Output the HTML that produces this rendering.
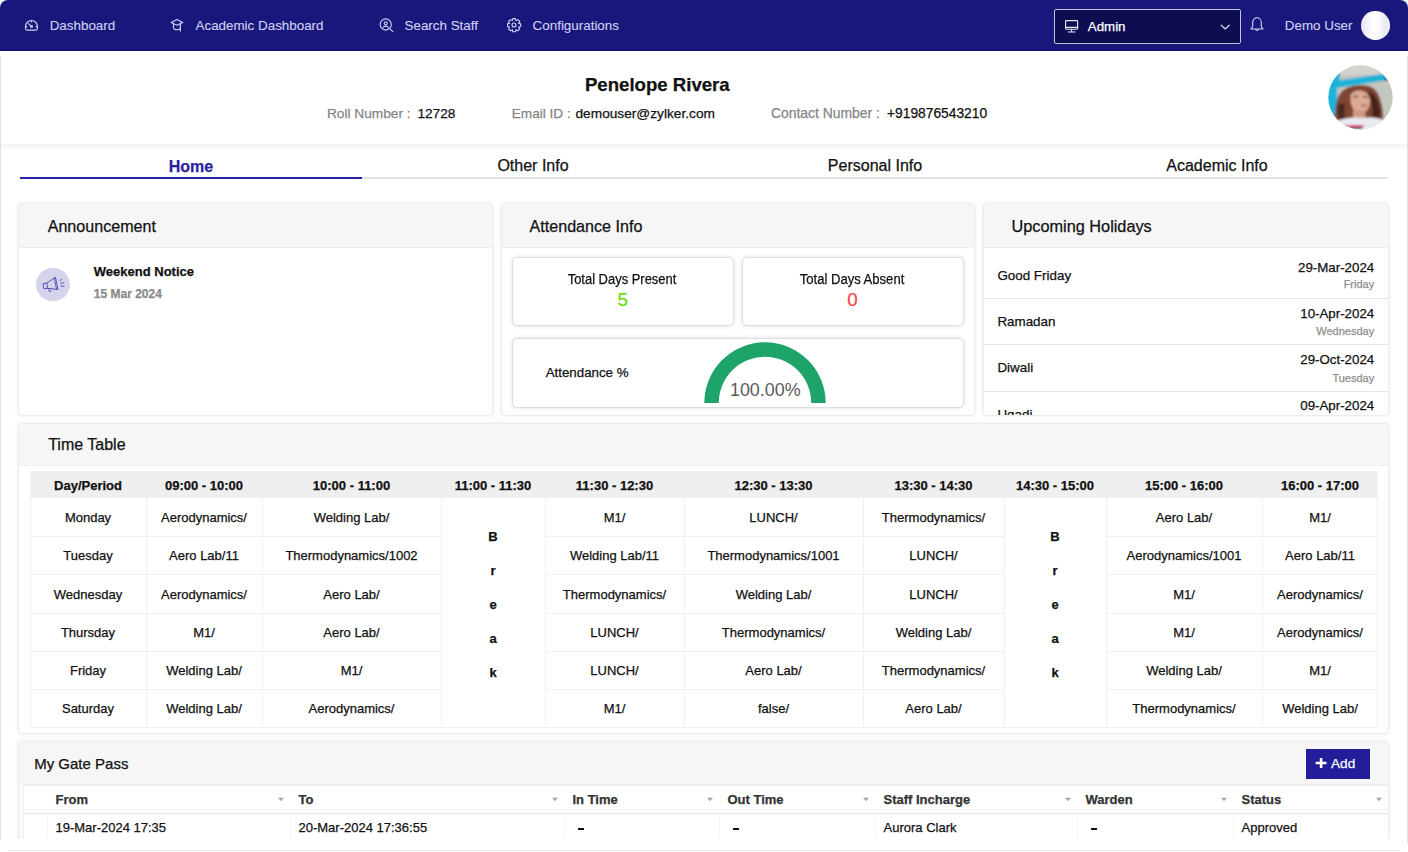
<!DOCTYPE html>
<html><head><meta charset="utf-8"><style>
html,body{margin:0;padding:0;}
body{width:1408px;height:852px;overflow:hidden;position:relative;background:#fff;font-family:"Liberation Sans",sans-serif;}
.t{position:absolute;white-space:nowrap;line-height:1;-webkit-text-stroke:0.25px currentColor;}
.c{text-align:center;}
.r{text-align:right;}
.b{position:absolute;}
</style></head><body>
<div class="b" style="left:0px;top:0px;width:1408px;height:51px;background:#19177c;border-radius:8px 8px 0 0;"></div>
<div class="b" style="left:0px;top:49px;width:1408px;height:2px;background:#110f79;"></div>
<svg class="b" style="left:24px;top:19px;" width="15" height="13" viewBox="0 0 15 13"><g fill="none" stroke="#d2d2f2" stroke-width="1.1" stroke-linecap="round" stroke-linejoin="round"><path d="M1.5 7.45 A5.95 5.95 0 1 1 13.4 7.45 V9.6 Q13.4 11.1 11.9 11.1 H3 Q1.5 11.1 1.5 9.6 Z"/><path d="M1.6 7.6h1.3M12 7.6h1.3M7.45 1.6v1.3M4.6 4.6l2.2 2.3"/><rect x="6.65" y="6.65" width="1.6" height="1.6"/></g></svg>
<div class="t" style="left:49.7px;top:19.26px;font-size:13.4px;color:#d2d2f2;-webkit-text-stroke:0.1px currentColor;">Dashboard</div>
<svg class="b" style="left:170px;top:18px;" width="15" height="15" viewBox="0 0 15 15"><g fill="none" stroke="#d2d2f2" stroke-width="1.1" stroke-linecap="round" stroke-linejoin="round"><path d="M1.2 4.5 L7 1.6 L12.8 4.5 L7 7.2 Z"/><path d="M3.5 5.8v3.2a3.5 2.8 0 0 0 7 0V5.8"/><path d="M10.4 5.2v7.8"/></g></svg>
<div class="t" style="left:195.5px;top:19.26px;font-size:13.4px;color:#d2d2f2;-webkit-text-stroke:0.1px currentColor;">Academic Dashboard</div>
<svg class="b" style="left:379px;top:18px;" width="15" height="15" viewBox="0 0 15 15"><g fill="none" stroke="#d2d2f2" stroke-width="1.1" stroke-linecap="round" stroke-linejoin="round"><circle cx="6.7" cy="6.5" r="5.6"/><circle cx="6.7" cy="5.2" r="1.5"/><path d="M4 9.3 Q6.7 6.8 9.4 9.3"/><path d="M10.8 10.6 L13.8 13.6"/></g></svg>
<div class="t" style="left:404.5px;top:19.26px;font-size:13.4px;color:#d2d2f2;-webkit-text-stroke:0.1px currentColor;">Search Staff</div>
<svg class="b" style="left:507px;top:18px;" width="15" height="15" viewBox="0 0 15 15"><g fill="none" stroke="#d2d2f2" stroke-width="1.1" stroke-linecap="round" stroke-linejoin="round"><polygon points="13.67,5.87 13.67,8.53 11.57,9.20 11.68,8.95 12.68,10.90 10.80,12.78 8.85,11.78 9.10,11.67 8.43,13.77 5.77,13.77 5.10,11.67 5.35,11.78 3.40,12.78 1.52,10.90 2.52,8.95 2.63,9.20 0.53,8.53 0.53,5.87 2.63,5.20 2.52,5.45 1.52,3.50 3.40,1.62 5.35,2.62 5.10,2.73 5.77,0.63 8.43,0.63 9.10,2.73 8.85,2.62 10.80,1.62 12.68,3.50 11.68,5.45 11.57,5.20"/><circle cx="7" cy="7" r="2"/></g></svg>
<div class="t" style="left:532.6px;top:19.26px;font-size:13.4px;color:#d2d2f2;-webkit-text-stroke:0.1px currentColor;">Configurations</div>
<div class="b" style="left:1054px;top:9px;width:187px;height:35px;background:#0f0d52;border:1.5px solid #c2c2dc;border-radius:2px;box-sizing:border-box;"></div>
<svg class="b" style="left:1064px;top:19px;" width="15" height="15" viewBox="0 0 15 15"><g fill="none" stroke="#e8e8f4" stroke-width="1.1" stroke-linecap="round" stroke-linejoin="round"><rect x="1.6" y="1.6" width="12" height="8.6" rx="0.6"/><path d="M1.6 8.4h12M7.6 10.4v2.4M4.2 13h6.8"/></g></svg>
<div class="t" style="left:1087.8px;top:20.24px;font-size:13.3px;color:#ffffff;">Admin</div>
<svg class="b" style="left:1219px;top:23px;" width="12" height="8" viewBox="0 0 12 8"><path d="M2.2 2.2 L6.2 6 L10.2 2.2" fill="none" stroke="#dcdcee" stroke-width="1.2" stroke-linecap="round"/></svg>
<svg class="b" style="left:1249px;top:16px;" width="16" height="17" viewBox="0 0 16 17"><g fill="none" stroke="#d2d2f2" stroke-width="1.1" stroke-linecap="round" stroke-linejoin="round"><path d="M2 13 Q3.6 11.6 3.7 9.6 V6.3 A4.3 4.5 0 0 1 12.3 6.3 V9.6 Q12.4 11.6 14 13 Z"/><path d="M6.6 13.4a1.5 1.5 0 0 0 2.8 0"/></g></svg>
<div class="t" style="left:1284.8px;top:19.26px;font-size:13.4px;color:#d2d2f2;-webkit-text-stroke:0.1px currentColor;">Demo User</div>
<div class="b" style="left:1361.2px;top:11.3px;width:28.4px;height:28.4px;border-radius:50%;background:linear-gradient(90deg,#e4e4ec 0%,#f6f6fa 25%,#ffffff 45%,#fbfbfd 60%,#e8e8ee 85%,#f4f4f6 100%);"></div>
<div class="b" style="left:8px;top:850px;width:1392px;height:1px;background:#e6e6e6;"></div>
<div class="b" style="left:0px;top:56px;width:1px;height:784px;background:#e0e0e0;"></div>
<div class="b" style="left:1407px;top:56px;width:1px;height:787px;background:#e0e0e0;"></div>
<div class="b" style="left:1px;top:144px;width:1406px;height:5px;background:linear-gradient(#f1f1f1,#f5f5f5 35%,#fafafa 75%,#fdfdfd);"></div>
<div class="t c" style="left:357.3px;width:600px;top:75.76px;font-size:18.6px;color:#111;font-weight:bold;">Penelope Rivera</div>
<div class="t" style="left:326.9px;top:107.20px;font-size:13.7px;color:#858585;">Roll Number : </div>
<div class="t" style="left:417.4px;top:107.20px;font-size:13.7px;color:#111;">12728</div>
<div class="t" style="left:511.8px;top:107.29px;font-size:13.6px;color:#858585;">Email ID : </div>
<div class="t" style="left:575.5px;top:107.20px;font-size:13.7px;color:#111;">demouser@zylker.com</div>
<div class="t" style="left:771.0px;top:107.03px;font-size:13.9px;color:#858585;">Contact Number : </div>
<div class="t" style="left:887.0px;top:107.12px;font-size:13.8px;color:#111;">+919876543210</div>
<svg class="b" style="left:1328px;top:65px;" width="65" height="65" viewBox="0 0 65 65">
<defs><clipPath id="pc"><circle cx="32.5" cy="32.5" r="32.2"/></clipPath>
<filter id="bl" x="-10%" y="-10%" width="120%" height="120%"><feGaussianBlur stdDeviation="0.9"/></filter></defs>
<g clip-path="url(#pc)"><g filter="url(#bl)">
<rect x="-2" y="-2" width="69" height="69" fill="#c4c6c0"/>
<rect x="-2" y="-2" width="69" height="12" fill="#d2d2ce"/>
<path d="M-2 6 L12 6 L11.5 15.3 L55.7 8.8 L62 13 L59.5 15 L9 23 L9.5 54 L-2 54 Z" fill="#1fb3d9"/>
<path d="M55 13 L62 12 L62 15 L56 16 Z" fill="#137a96"/>
<path d="M7 58 Q6 40 11 30 Q17 20 33 20 Q47 20 51 31 Q56 44 55 56 L50 60 L12 60 Z" fill="#7e4432"/>
<path d="M40 26 Q50 30 52 45 Q53 52 49 56 L44 50 Q46 38 40 30 Z" fill="#45231c"/>
<path d="M10 40 Q9 50 12 56 L18 56 Q15 48 17 38 Z" fill="#4a2720"/>
<path d="M22.5 30 Q25 25 33 25.5 Q41.5 27 42 35 Q42 44 37 47 Q31 49 26 45 Q22 40 22.5 30 Z" fill="#dcab94"/>
<path d="M25 45 L37 45 L38 54 L25 54 Z" fill="#d09a80"/>
<path d="M25 31.5 h5 M35 32 h5" stroke="#6a4a44" stroke-width="1.5"/>
<ellipse cx="36" cy="40.5" rx="3" ry="1.2" fill="#b86c66"/>
<path d="M4 70 L8 56 Q22 51 34 53 Q48 51 58 56 L62 70 Z" fill="#eaeaf2"/>
<rect x="16" y="60" width="20" height="2" fill="#e03850"/>
<rect x="22" y="62.2" width="12" height="2" fill="#3a3f7a"/>
</g></g></svg>
<div class="t c" style="left:-109.0px;width:600px;top:158.56px;font-size:16px;color:#2824a0;font-weight:bold;">Home</div>
<div class="t c" style="left:233.0px;width:600px;top:157.86px;font-size:16px;color:#111;">Other Info</div>
<div class="t c" style="left:575.0px;width:600px;top:157.86px;font-size:16px;color:#111;">Personal Info</div>
<div class="t c" style="left:917.0px;width:600px;top:157.86px;font-size:16px;color:#111;">Academic Info</div>
<div class="b" style="left:362px;top:177px;width:1026px;height:2px;background:#e3e3e3;"></div>
<div class="b" style="left:20px;top:177px;width:342px;height:2px;background:#2723a2;"></div>
<div class="b" style="left:18px;top:203px;width:475px;height:213px;background:#fff;border:1px solid #ebebeb;border-radius:4px;box-shadow:0 0 5px rgba(0,0,0,0.07);box-sizing:border-box;"></div><div class="b" style="left:19px;top:204px;width:473px;height:43.5px;background:#f6f6f6;border-radius:3px 3px 0 0;"></div><div class="b" style="left:19px;top:247px;width:473px;height:1px;background:#eeeeee;"></div>
<div class="b" style="left:501px;top:203px;width:474px;height:213px;background:#fff;border:1px solid #ebebeb;border-radius:4px;box-shadow:0 0 5px rgba(0,0,0,0.07);box-sizing:border-box;"></div><div class="b" style="left:502px;top:204px;width:472px;height:43.5px;background:#f6f6f6;border-radius:3px 3px 0 0;"></div><div class="b" style="left:502px;top:247px;width:472px;height:1px;background:#eeeeee;"></div>
<div class="b" style="left:983px;top:203px;width:406px;height:213px;background:#fff;border:1px solid #ebebeb;border-radius:4px;box-shadow:0 0 5px rgba(0,0,0,0.07);box-sizing:border-box;"></div><div class="b" style="left:984px;top:204px;width:404px;height:43.5px;background:#f6f6f6;border-radius:3px 3px 0 0;"></div><div class="b" style="left:984px;top:247px;width:404px;height:1px;background:#eeeeee;"></div>
<div class="t" style="left:47.7px;top:218.47px;font-size:16.1px;color:#111;">Announcement</div>
<div class="t" style="left:529.6px;top:218.47px;font-size:16.1px;color:#111;">Attendance Info</div>
<div class="t" style="left:1011.5px;top:218.30px;font-size:16.3px;color:#111;">Upcoming Holidays</div>
<div class="b" style="left:36.3px;top:267.7px;width:33.5px;height:33.5px;border-radius:50%;background:#d5d4ec;"></div>
<svg class="b" style="left:33px;top:265px;" width="40" height="40" viewBox="0 0 40 40"><g fill="none" stroke="#4f4cb6" stroke-width="0.95" stroke-linecap="round" stroke-linejoin="round"><path d="M10.5 18.7 L13.8 18.1 L14.5 23.3 L11.2 23.7 Z"/><path d="M13.8 18.1 L22.4 12.2 L25.1 24.5 L14.5 23.3"/><path d="M21.3 13.2 L23.6 24.3"/><path d="M15.6 23.6 L16.4 26.4 L18 26.2"/><path d="M27.3 15.6 L28.8 14M27.6 18.2 L30.8 17.9M27.9 21 L31.2 21.3"/></g></svg>
<div class="t" style="left:93.8px;top:264.60px;font-size:13px;color:#111;font-weight:bold;">Weekend Notice</div>
<div class="t" style="left:93.8px;top:287.74px;font-size:12px;color:#8a8a8a;font-weight:bold;">15 Mar 2024</div>
<div class="b" style="left:512px;top:257px;width:222px;height:69px;background:#fff;border:1px solid #dedede;border-radius:5px;box-shadow:0 0 4px rgba(0,0,0,0.13);box-sizing:border-box;"></div>
<div class="b" style="left:742px;top:257px;width:222px;height:69px;background:#fff;border:1px solid #dedede;border-radius:5px;box-shadow:0 0 4px rgba(0,0,0,0.13);box-sizing:border-box;"></div>
<div class="b" style="left:512px;top:338px;width:452px;height:70px;background:#fff;border:1px solid #dedede;border-radius:5px;box-shadow:0 0 4px rgba(0,0,0,0.13);box-sizing:border-box;"></div>
<div class="t c" style="left:322.4px;width:600px;top:272.05px;font-size:14px;color:#111;transform:scaleX(0.925);">Total Days Present</div>
<div class="t c" style="left:322.7px;width:600px;top:291.49px;font-size:18.8px;color:#6edc0c;">5</div>
<div class="t c" style="left:552.4px;width:600px;top:272.05px;font-size:14px;color:#111;transform:scaleX(0.933);">Total Days Absent</div>
<div class="t c" style="left:552.5px;width:600px;top:291.49px;font-size:18.8px;color:#f5484a;">0</div>
<div class="t" style="left:545.7px;top:366.44px;font-size:13.3px;color:#111;">Attendance %</div>
<svg class="b" style="left:700px;top:338px;" width="130" height="66" viewBox="700 338 130 66">
<path d="M704.3 403 A60.7 60.7 0 0 1 825.7 403 L811.2 403 A46.2 46.2 0 0 0 718.8 403 Z" fill="#1ea46b"/></svg>
<div class="t c" style="left:465.3px;width:600px;top:381.65px;font-size:17.9px;color:#5a5a5a;-webkit-text-stroke:0;">100.00%</div>
<div class="b" style="left:984px;top:298px;width:404px;height:1px;background:#e6e6e6;"></div>
<div class="b" style="left:984px;top:344px;width:404px;height:1px;background:#e6e6e6;"></div>
<div class="b" style="left:984px;top:391px;width:404px;height:1px;background:#e6e6e6;"></div>
<div class="b" style="left:984px;top:248px;width:404px;height:167px;overflow:hidden;">
<div class="t" style="left:13.4px;top:20.96px;font-size:13.4px;color:#111;">Good Friday</div>
<div class="t r" style="left:-209.8px;width:600px;top:12.74px;font-size:13.3px;color:#111;">29-Mar-2024</div>
<div class="t r" style="left:-209.8px;width:600px;top:30.99px;font-size:11px;color:#8e8e8e;">Friday</div>
<div class="t" style="left:13.4px;top:67.16px;font-size:13.4px;color:#111;">Ramadan</div>
<div class="t r" style="left:-209.8px;width:600px;top:58.94px;font-size:13.3px;color:#111;">10-Apr-2024</div>
<div class="t r" style="left:-209.8px;width:600px;top:78.19px;font-size:11px;color:#8e8e8e;">Wednesday</div>
<div class="t" style="left:13.4px;top:113.46px;font-size:13.4px;color:#111;">Diwali</div>
<div class="t r" style="left:-209.8px;width:600px;top:105.44px;font-size:13.3px;color:#111;">29-Oct-2024</div>
<div class="t r" style="left:-209.8px;width:600px;top:124.69px;font-size:11px;color:#8e8e8e;">Tuesday</div>
<div class="t" style="left:13.4px;top:159.66px;font-size:13.4px;color:#111;">Ugadi</div>
<div class="t r" style="left:-209.8px;width:600px;top:151.34px;font-size:13.3px;color:#111;">09-Apr-2024</div>
</div>
<div class="b" style="left:18px;top:423px;width:1371px;height:311px;background:#fff;border:1px solid #ebebeb;border-radius:4px;box-shadow:0 0 5px rgba(0,0,0,0.07);box-sizing:border-box;"></div><div class="b" style="left:19px;top:424px;width:1369px;height:42px;background:#f6f6f6;border-radius:3px 3px 0 0;"></div><div class="b" style="left:19px;top:465px;width:1369px;height:1px;background:#eeeeee;"></div>
<div class="t" style="left:48.2px;top:436.56px;font-size:16px;color:#111;">Time Table</div>
<div class="b" style="left:30px;top:471px;width:1348px;height:27px;background:#efefef;"></div>
<div class="t c" style="left:-212.0px;width:600px;top:478.70px;font-size:13px;color:#111;font-weight:bold;">Day/Period</div>
<div class="t c" style="left:-96.0px;width:600px;top:478.70px;font-size:13px;color:#111;font-weight:bold;">09:00 - 10:00</div>
<div class="t c" style="left:51.5px;width:600px;top:478.70px;font-size:13px;color:#111;font-weight:bold;">10:00 - 11:00</div>
<div class="t c" style="left:193.0px;width:600px;top:478.70px;font-size:13px;color:#111;font-weight:bold;">11:00 - 11:30</div>
<div class="t c" style="left:314.5px;width:600px;top:478.70px;font-size:13px;color:#111;font-weight:bold;">11:30 - 12:30</div>
<div class="t c" style="left:473.5px;width:600px;top:478.70px;font-size:13px;color:#111;font-weight:bold;">12:30 - 13:30</div>
<div class="t c" style="left:633.5px;width:600px;top:478.70px;font-size:13px;color:#111;font-weight:bold;">13:30 - 14:30</div>
<div class="t c" style="left:755.0px;width:600px;top:478.70px;font-size:13px;color:#111;font-weight:bold;">14:30 - 15:00</div>
<div class="t c" style="left:884.0px;width:600px;top:478.70px;font-size:13px;color:#111;font-weight:bold;">15:00 - 16:00</div>
<div class="t c" style="left:1020.0px;width:600px;top:478.70px;font-size:13px;color:#111;font-weight:bold;">16:00 - 17:00</div>
<div class="b" style="left:30px;top:536px;width:116px;height:1px;background:#f0f0f0;"></div>
<div class="b" style="left:146px;top:536px;width:116px;height:1px;background:#f0f0f0;"></div>
<div class="b" style="left:262px;top:536px;width:179px;height:1px;background:#f0f0f0;"></div>
<div class="b" style="left:545px;top:536px;width:139px;height:1px;background:#f0f0f0;"></div>
<div class="b" style="left:684px;top:536px;width:179px;height:1px;background:#f0f0f0;"></div>
<div class="b" style="left:863px;top:536px;width:141px;height:1px;background:#f0f0f0;"></div>
<div class="b" style="left:1106px;top:536px;width:156px;height:1px;background:#f0f0f0;"></div>
<div class="b" style="left:1262px;top:536px;width:116px;height:1px;background:#f0f0f0;"></div>
<div class="b" style="left:30px;top:574px;width:116px;height:1px;background:#f0f0f0;"></div>
<div class="b" style="left:146px;top:574px;width:116px;height:1px;background:#f0f0f0;"></div>
<div class="b" style="left:262px;top:574px;width:179px;height:1px;background:#f0f0f0;"></div>
<div class="b" style="left:545px;top:574px;width:139px;height:1px;background:#f0f0f0;"></div>
<div class="b" style="left:684px;top:574px;width:179px;height:1px;background:#f0f0f0;"></div>
<div class="b" style="left:863px;top:574px;width:141px;height:1px;background:#f0f0f0;"></div>
<div class="b" style="left:1106px;top:574px;width:156px;height:1px;background:#f0f0f0;"></div>
<div class="b" style="left:1262px;top:574px;width:116px;height:1px;background:#f0f0f0;"></div>
<div class="b" style="left:30px;top:613px;width:116px;height:1px;background:#f0f0f0;"></div>
<div class="b" style="left:146px;top:613px;width:116px;height:1px;background:#f0f0f0;"></div>
<div class="b" style="left:262px;top:613px;width:179px;height:1px;background:#f0f0f0;"></div>
<div class="b" style="left:545px;top:613px;width:139px;height:1px;background:#f0f0f0;"></div>
<div class="b" style="left:684px;top:613px;width:179px;height:1px;background:#f0f0f0;"></div>
<div class="b" style="left:863px;top:613px;width:141px;height:1px;background:#f0f0f0;"></div>
<div class="b" style="left:1106px;top:613px;width:156px;height:1px;background:#f0f0f0;"></div>
<div class="b" style="left:1262px;top:613px;width:116px;height:1px;background:#f0f0f0;"></div>
<div class="b" style="left:30px;top:651px;width:116px;height:1px;background:#f0f0f0;"></div>
<div class="b" style="left:146px;top:651px;width:116px;height:1px;background:#f0f0f0;"></div>
<div class="b" style="left:262px;top:651px;width:179px;height:1px;background:#f0f0f0;"></div>
<div class="b" style="left:545px;top:651px;width:139px;height:1px;background:#f0f0f0;"></div>
<div class="b" style="left:684px;top:651px;width:179px;height:1px;background:#f0f0f0;"></div>
<div class="b" style="left:863px;top:651px;width:141px;height:1px;background:#f0f0f0;"></div>
<div class="b" style="left:1106px;top:651px;width:156px;height:1px;background:#f0f0f0;"></div>
<div class="b" style="left:1262px;top:651px;width:116px;height:1px;background:#f0f0f0;"></div>
<div class="b" style="left:30px;top:689px;width:116px;height:1px;background:#f0f0f0;"></div>
<div class="b" style="left:146px;top:689px;width:116px;height:1px;background:#f0f0f0;"></div>
<div class="b" style="left:262px;top:689px;width:179px;height:1px;background:#f0f0f0;"></div>
<div class="b" style="left:545px;top:689px;width:139px;height:1px;background:#f0f0f0;"></div>
<div class="b" style="left:684px;top:689px;width:179px;height:1px;background:#f0f0f0;"></div>
<div class="b" style="left:863px;top:689px;width:141px;height:1px;background:#f0f0f0;"></div>
<div class="b" style="left:1106px;top:689px;width:156px;height:1px;background:#f0f0f0;"></div>
<div class="b" style="left:1262px;top:689px;width:116px;height:1px;background:#f0f0f0;"></div>
<div class="b" style="left:30px;top:727px;width:116px;height:1px;background:#f0f0f0;"></div>
<div class="b" style="left:146px;top:727px;width:116px;height:1px;background:#f0f0f0;"></div>
<div class="b" style="left:262px;top:727px;width:179px;height:1px;background:#f0f0f0;"></div>
<div class="b" style="left:441px;top:727px;width:104px;height:1px;background:#f0f0f0;"></div>
<div class="b" style="left:545px;top:727px;width:139px;height:1px;background:#f0f0f0;"></div>
<div class="b" style="left:684px;top:727px;width:179px;height:1px;background:#f0f0f0;"></div>
<div class="b" style="left:863px;top:727px;width:141px;height:1px;background:#f0f0f0;"></div>
<div class="b" style="left:1004px;top:727px;width:102px;height:1px;background:#f0f0f0;"></div>
<div class="b" style="left:1106px;top:727px;width:156px;height:1px;background:#f0f0f0;"></div>
<div class="b" style="left:1262px;top:727px;width:116px;height:1px;background:#f0f0f0;"></div>
<div class="b" style="left:30px;top:498px;width:1px;height:230px;background:#f0f0f0;"></div>
<div class="b" style="left:146px;top:498px;width:1px;height:230px;background:#f0f0f0;"></div>
<div class="b" style="left:262px;top:498px;width:1px;height:230px;background:#f0f0f0;"></div>
<div class="b" style="left:441px;top:498px;width:1px;height:230px;background:#f0f0f0;"></div>
<div class="b" style="left:545px;top:498px;width:1px;height:230px;background:#f0f0f0;"></div>
<div class="b" style="left:684px;top:498px;width:1px;height:230px;background:#f0f0f0;"></div>
<div class="b" style="left:863px;top:498px;width:1px;height:230px;background:#f0f0f0;"></div>
<div class="b" style="left:1004px;top:498px;width:1px;height:230px;background:#f0f0f0;"></div>
<div class="b" style="left:1106px;top:498px;width:1px;height:230px;background:#f0f0f0;"></div>
<div class="b" style="left:1262px;top:498px;width:1px;height:230px;background:#f0f0f0;"></div>
<div class="b" style="left:1377px;top:498px;width:1px;height:230px;background:#f0f0f0;"></div>
<div class="t c" style="left:-212.0px;width:600px;top:511.10px;font-size:13px;color:#111;">Monday</div>
<div class="t c" style="left:-96.0px;width:600px;top:511.10px;font-size:13px;color:#111;">Aerodynamics/</div>
<div class="t c" style="left:51.5px;width:600px;top:511.10px;font-size:13px;color:#111;">Welding Lab/</div>
<div class="t c" style="left:314.5px;width:600px;top:511.10px;font-size:13px;color:#111;">M1/</div>
<div class="t c" style="left:473.5px;width:600px;top:511.10px;font-size:13px;color:#111;">LUNCH/</div>
<div class="t c" style="left:633.5px;width:600px;top:511.10px;font-size:13px;color:#111;">Thermodynamics/</div>
<div class="t c" style="left:884.0px;width:600px;top:511.10px;font-size:13px;color:#111;">Aero Lab/</div>
<div class="t c" style="left:1020.0px;width:600px;top:511.10px;font-size:13px;color:#111;">M1/</div>
<div class="t c" style="left:-212.0px;width:600px;top:549.30px;font-size:13px;color:#111;">Tuesday</div>
<div class="t c" style="left:-96.0px;width:600px;top:549.30px;font-size:13px;color:#111;">Aero Lab/11</div>
<div class="t c" style="left:51.5px;width:600px;top:549.30px;font-size:13px;color:#111;">Thermodynamics/1002</div>
<div class="t c" style="left:314.5px;width:600px;top:549.30px;font-size:13px;color:#111;">Welding Lab/11</div>
<div class="t c" style="left:473.5px;width:600px;top:549.30px;font-size:13px;color:#111;">Thermodynamics/1001</div>
<div class="t c" style="left:633.5px;width:600px;top:549.30px;font-size:13px;color:#111;">LUNCH/</div>
<div class="t c" style="left:884.0px;width:600px;top:549.30px;font-size:13px;color:#111;">Aerodynamics/1001</div>
<div class="t c" style="left:1020.0px;width:600px;top:549.30px;font-size:13px;color:#111;">Aero Lab/11</div>
<div class="t c" style="left:-212.0px;width:600px;top:587.50px;font-size:13px;color:#111;">Wednesday</div>
<div class="t c" style="left:-96.0px;width:600px;top:587.50px;font-size:13px;color:#111;">Aerodynamics/</div>
<div class="t c" style="left:51.5px;width:600px;top:587.50px;font-size:13px;color:#111;">Aero Lab/</div>
<div class="t c" style="left:314.5px;width:600px;top:587.50px;font-size:13px;color:#111;">Thermodynamics/</div>
<div class="t c" style="left:473.5px;width:600px;top:587.50px;font-size:13px;color:#111;">Welding Lab/</div>
<div class="t c" style="left:633.5px;width:600px;top:587.50px;font-size:13px;color:#111;">LUNCH/</div>
<div class="t c" style="left:884.0px;width:600px;top:587.50px;font-size:13px;color:#111;">M1/</div>
<div class="t c" style="left:1020.0px;width:600px;top:587.50px;font-size:13px;color:#111;">Aerodynamics/</div>
<div class="t c" style="left:-212.0px;width:600px;top:625.70px;font-size:13px;color:#111;">Thursday</div>
<div class="t c" style="left:-96.0px;width:600px;top:625.70px;font-size:13px;color:#111;">M1/</div>
<div class="t c" style="left:51.5px;width:600px;top:625.70px;font-size:13px;color:#111;">Aero Lab/</div>
<div class="t c" style="left:314.5px;width:600px;top:625.70px;font-size:13px;color:#111;">LUNCH/</div>
<div class="t c" style="left:473.5px;width:600px;top:625.70px;font-size:13px;color:#111;">Thermodynamics/</div>
<div class="t c" style="left:633.5px;width:600px;top:625.70px;font-size:13px;color:#111;">Welding Lab/</div>
<div class="t c" style="left:884.0px;width:600px;top:625.70px;font-size:13px;color:#111;">M1/</div>
<div class="t c" style="left:1020.0px;width:600px;top:625.70px;font-size:13px;color:#111;">Aerodynamics/</div>
<div class="t c" style="left:-212.0px;width:600px;top:663.90px;font-size:13px;color:#111;">Friday</div>
<div class="t c" style="left:-96.0px;width:600px;top:663.90px;font-size:13px;color:#111;">Welding Lab/</div>
<div class="t c" style="left:51.5px;width:600px;top:663.90px;font-size:13px;color:#111;">M1/</div>
<div class="t c" style="left:314.5px;width:600px;top:663.90px;font-size:13px;color:#111;">LUNCH/</div>
<div class="t c" style="left:473.5px;width:600px;top:663.90px;font-size:13px;color:#111;">Aero Lab/</div>
<div class="t c" style="left:633.5px;width:600px;top:663.90px;font-size:13px;color:#111;">Thermodynamics/</div>
<div class="t c" style="left:884.0px;width:600px;top:663.90px;font-size:13px;color:#111;">Welding Lab/</div>
<div class="t c" style="left:1020.0px;width:600px;top:663.90px;font-size:13px;color:#111;">M1/</div>
<div class="t c" style="left:-212.0px;width:600px;top:702.10px;font-size:13px;color:#111;">Saturday</div>
<div class="t c" style="left:-96.0px;width:600px;top:702.10px;font-size:13px;color:#111;">Welding Lab/</div>
<div class="t c" style="left:51.5px;width:600px;top:702.10px;font-size:13px;color:#111;">Aerodynamics/</div>
<div class="t c" style="left:314.5px;width:600px;top:702.10px;font-size:13px;color:#111;">M1/</div>
<div class="t c" style="left:473.5px;width:600px;top:702.10px;font-size:13px;color:#111;">false/</div>
<div class="t c" style="left:633.5px;width:600px;top:702.10px;font-size:13px;color:#111;">Aero Lab/</div>
<div class="t c" style="left:884.0px;width:600px;top:702.10px;font-size:13px;color:#111;">Thermodynamics/</div>
<div class="t c" style="left:1020.0px;width:600px;top:702.10px;font-size:13px;color:#111;">Welding Lab/</div>
<div class="t c" style="left:193.0px;width:600px;top:530.00px;font-size:13px;color:#111;font-weight:bold;">B</div>
<div class="t c" style="left:193.0px;width:600px;top:564.00px;font-size:13px;color:#111;font-weight:bold;">r</div>
<div class="t c" style="left:193.0px;width:600px;top:598.00px;font-size:13px;color:#111;font-weight:bold;">e</div>
<div class="t c" style="left:193.0px;width:600px;top:632.00px;font-size:13px;color:#111;font-weight:bold;">a</div>
<div class="t c" style="left:193.0px;width:600px;top:666.00px;font-size:13px;color:#111;font-weight:bold;">k</div>
<div class="t c" style="left:755.0px;width:600px;top:530.00px;font-size:13px;color:#111;font-weight:bold;">B</div>
<div class="t c" style="left:755.0px;width:600px;top:564.00px;font-size:13px;color:#111;font-weight:bold;">r</div>
<div class="t c" style="left:755.0px;width:600px;top:598.00px;font-size:13px;color:#111;font-weight:bold;">e</div>
<div class="t c" style="left:755.0px;width:600px;top:632.00px;font-size:13px;color:#111;font-weight:bold;">a</div>
<div class="t c" style="left:755.0px;width:600px;top:666.00px;font-size:13px;color:#111;font-weight:bold;">k</div>
<div class="b" style="left:0;top:735px;width:1404px;height:104px;overflow:hidden;">
<div class="b" style="left:18px;top:6px;width:1371px;height:109px;background:#fff;border:1px solid #ebebeb;border-radius:4px;box-shadow:0 0 5px rgba(0,0,0,0.07);box-sizing:border-box;"></div><div class="b" style="left:19px;top:7px;width:1369px;height:43px;background:#f6f6f6;border-radius:3px 3px 0 0;"></div><div class="b" style="left:19px;top:49px;width:1369px;height:1px;background:#eeeeee;"></div>
<div class="t" style="left:34.2px;top:21.40px;font-size:15px;color:#111;">My Gate Pass</div>
<div class="b" style="left:1306px;top:14px;width:64px;height:30px;background:#221e9a;"></div>
<svg class="b" style="left:1315px;top:22px;" width="12" height="12" viewBox="0 0 12 12"><path d="M6.1 1v10M0.7 6h10.8" stroke="#fff" stroke-width="2.6"/></svg>
<div class="t" style="left:1331.0px;top:21.99px;font-size:13.6px;color:#fff;">Add</div>
<div class="b" style="left:23px;top:78px;width:1365px;height:1px;background:#e8e8e8;"></div>
<div class="b" style="left:23px;top:50px;width:1365px;height:1px;background:#ececec;"></div>
<div class="b" style="left:23px;top:55px;width:1365px;height:1px;background:#f7f7f7;"></div>
<div class="b" style="left:23px;top:74px;width:1365px;height:1px;background:#f5f5f5;"></div>
<div class="b" style="left:19px;top:51px;width:4px;height:53px;background:#fafafa;"></div>
<div class="b" style="left:23px;top:51px;width:1px;height:53px;background:#f1f1f1;"></div>
<div class="t" style="left:55.5px;top:58.40px;font-size:13px;color:#333;font-weight:bold;">From</div>
<svg class="b" style="left:277px;top:62px;" width="8" height="5" viewBox="0 0 8 5"><path d="M1 0.8h6L4 4.2z" fill="#a8a8a8"/></svg>
<div class="t" style="left:55.5px;top:86.10px;font-size:13px;color:#111;">19-Mar-2024 17:35</div>
<div class="t" style="left:298.5px;top:58.40px;font-size:13px;color:#333;font-weight:bold;">To</div>
<svg class="b" style="left:551px;top:62px;" width="8" height="5" viewBox="0 0 8 5"><path d="M1 0.8h6L4 4.2z" fill="#a8a8a8"/></svg>
<div class="t" style="left:298.5px;top:86.10px;font-size:13px;color:#111;">20-Mar-2024 17:36:55</div>
<div class="t" style="left:572.5px;top:58.40px;font-size:13px;color:#333;font-weight:bold;">In Time</div>
<svg class="b" style="left:706px;top:62px;" width="8" height="5" viewBox="0 0 8 5"><path d="M1 0.8h6L4 4.2z" fill="#a8a8a8"/></svg>
<div class="b" style="left:578.4px;top:92.5px;width:6px;height:2px;background:#111;"></div>
<div class="t" style="left:727.5px;top:58.40px;font-size:13px;color:#333;font-weight:bold;">Out Time</div>
<svg class="b" style="left:862px;top:62px;" width="8" height="5" viewBox="0 0 8 5"><path d="M1 0.8h6L4 4.2z" fill="#a8a8a8"/></svg>
<div class="b" style="left:733.4px;top:92.5px;width:6px;height:2px;background:#111;"></div>
<div class="t" style="left:883.5px;top:58.40px;font-size:13px;color:#333;font-weight:bold;">Staff Incharge</div>
<svg class="b" style="left:1064px;top:62px;" width="8" height="5" viewBox="0 0 8 5"><path d="M1 0.8h6L4 4.2z" fill="#a8a8a8"/></svg>
<div class="t" style="left:883.5px;top:86.10px;font-size:13px;color:#111;">Aurora Clark</div>
<div class="t" style="left:1085.5px;top:58.40px;font-size:13px;color:#333;font-weight:bold;">Warden</div>
<svg class="b" style="left:1220px;top:62px;" width="8" height="5" viewBox="0 0 8 5"><path d="M1 0.8h6L4 4.2z" fill="#a8a8a8"/></svg>
<div class="b" style="left:1091.4px;top:92.5px;width:6px;height:2px;background:#111;"></div>
<div class="t" style="left:1241.5px;top:58.40px;font-size:13px;color:#333;font-weight:bold;">Status</div>
<svg class="b" style="left:1375px;top:62px;" width="8" height="5" viewBox="0 0 8 5"><path d="M1 0.8h6L4 4.2z" fill="#a8a8a8"/></svg>
<div class="t" style="left:1241.5px;top:86.10px;font-size:13px;color:#111;">Approved</div>
<div class="b" style="left:47px;top:79px;width:1px;height:25px;background:#f6f6f6;"></div>
<div class="b" style="left:290px;top:79px;width:1px;height:25px;background:#f6f6f6;"></div>
<div class="b" style="left:564px;top:79px;width:1px;height:25px;background:#f6f6f6;"></div>
<div class="b" style="left:719px;top:79px;width:1px;height:25px;background:#f6f6f6;"></div>
<div class="b" style="left:875px;top:79px;width:1px;height:25px;background:#f6f6f6;"></div>
<div class="b" style="left:1077px;top:79px;width:1px;height:25px;background:#f6f6f6;"></div>
<div class="b" style="left:1233px;top:79px;width:1px;height:25px;background:#f6f6f6;"></div>
</div>
</body></html>
